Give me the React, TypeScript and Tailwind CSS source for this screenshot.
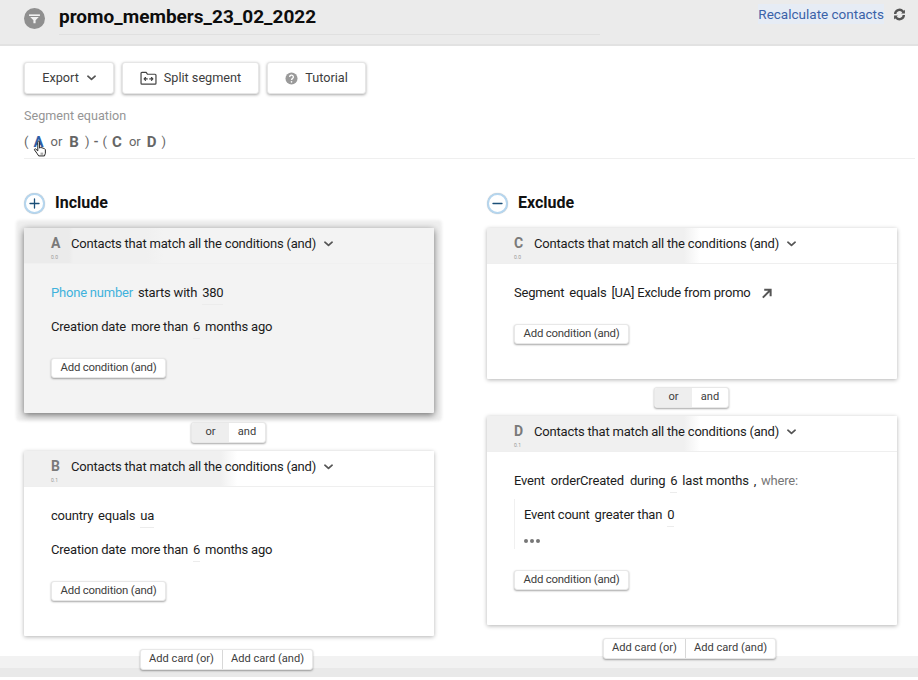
import React from "react";

const Chevron = ({ className = "" }: { className?: string }) => (
  <svg viewBox="0 0 10 6" className={`w-[9px] h-[6px] ${className}`} fill="none" stroke="#555" strokeWidth="1.9" strokeLinecap="round" strokeLinejoin="round">
    <path d="M1 1l4 3.6L9 1" />
  </svg>
);

const Btn = ({ children, className = "" }: { children: React.ReactNode; className?: string }) => (
  <button className={`h-[32px] bg-white rounded-[3px] border border-[#e6e6e6] shadow-[0_1px_3px_rgba(0,0,0,0.35)] text-[12.7px] text-[#3d3d3d] flex items-center justify-center ${className}`}>
    {children}
  </button>
);

const Val = ({ children }: { children: React.ReactNode }) => (
  <span className="relative after:absolute after:left-0 after:right-0 after:top-[19px] after:h-px after:bg-[#ececec]">{children}</span>
);

const AddCondition = () => (
  <button className="w-[115px] h-[20px] bg-white rounded-[3px] border border-[#e8e8e8] shadow-[0_1px_2px_rgba(0,0,0,0.35)] text-[11.4px] text-[#3d3d3d] flex items-center justify-center">
    Add condition (and)
  </button>
);

const Card = ({
  letter, index, active = false, height, children,
}: { letter: string; index: string; active?: boolean; height: string; children: React.ReactNode }) => (
  <div className={`w-[410px] rounded-[1px] flex flex-col ${height} ${active ? "bg-[#f3f3f3] shadow-[0_2px_7px_rgba(0,0,0,0.55),0_0_3px_8px_#efefef]" : "bg-white shadow-[0_1px_4px_rgba(0,0,0,0.3)]"}`}>
    <div className={`h-[36px] shrink-0 flex relative border-b ${active ? "border-[#f0f0f0] bg-[linear-gradient(90deg,#ebebeb_0,#ebebeb_11%,#f0f0f0_12%,#f0f0f0_30%,#f3f3f3_34%)]" : "border-[#efefef] bg-[linear-gradient(90deg,#f0f0f0_0,#f0f0f0_48%,#ffffff_52%)]"}`}>
      <div className="pl-[27px] w-[47px] shrink-0 flex flex-col">
        <span className="text-[14px] leading-[16px] mt-[7px] font-bold text-[#7a7a7a]">{letter}</span>
        <span className="text-[5px] leading-[6px] mt-[3px] text-[#999]">{index}</span>
      </div>
      <div className="flex items-center gap-[8px] h-[32px] text-[13px] tracking-[-0.2px] text-[#1c1c1c]">
        <span>Contacts that match all the conditions (and)</span>
        <Chevron />
      </div>
    </div>
    <div className="pl-[27px] flex flex-col text-[13px] tracking-[-0.2px] text-[#1c1c1c]">{children}</div>
  </div>
);

const OrAnd = () => (
  <div className="flex h-[21px] w-[75px] ml-[167px] rounded-[3px] border border-[#e8e8e8] shadow-[0_1px_2px_rgba(0,0,0,0.35)] text-[11.1px] text-[#3d3d3d] overflow-hidden bg-white">
    <span className="w-[37px] bg-[#eeeeee] flex items-center justify-center">or</span>
    <span className="flex-1 flex items-center justify-center">and</span>
  </div>
);

const AddCards = () => (
  <div className="flex h-[21px] w-[173px] ml-[116px] rounded-[3px] border border-[#e8e8e8] shadow-[0_1px_2px_rgba(0,0,0,0.35)] text-[11.1px] text-[#3d3d3d] bg-white relative">
    <span className="w-[82px] border-r border-[#d8d8d8] flex items-center justify-center">Add card (or)</span>
    <span className="flex-1 flex items-center justify-center">Add card (and)</span>
  </div>
);

const Row = ({ children, className = "" }: { children: React.ReactNode; className?: string }) => (
  <div className={`flex gap-[5px] leading-[16px] ${className}`}>{children}</div>
);

const Heading = ({ sign, title }: { sign: "+" | "-"; title: string }) => (
  <div className="flex items-center gap-[10px] h-[24px]">
    <span className="w-[21px] h-[21px] rounded-full border-2 border-[#b5d6ef] bg-white flex items-center justify-center shadow-[0_0_1px_rgba(0,0,0,0.3)]">
      <svg viewBox="0 0 11 11" className="w-[11px] h-[11px]" stroke="#1b4f78" strokeWidth="1.3" strokeLinecap="round">
        <path d="M1 5.5h9" />
        {sign === "+" && <path d="M5.5 1v9" />}
      </svg>
    </span>
    <span className="text-[16px] font-bold text-[#111]">{title}</span>
  </div>
);

export default function App() {
  return (
    <div className="w-[918px] h-[680px] overflow-hidden relative bg-white font-['Roboto','Liberation_Sans',sans-serif]">
      {/* bottom page band, behind the content */}
      <div className="absolute left-0 right-0 top-[656px] h-[21px] bg-[#f2f2f2] border-b-[9px] border-[#e9e9e9]" />

      <div className="relative">
        <header className="h-[46px] bg-[#ebebeb] border-b-2 border-[#e2e2e2] flex items-start pl-[24px] pr-[12px]">
          <span className="w-[21px] h-[21px] mt-[8px] rounded-full bg-[#8f8f8f] flex items-center justify-center shrink-0">
            <svg viewBox="0 0 12 12" className="w-[13px] h-[13px]" fill="#f2f2f2">
              <path d="M1 2.2h10v1.5H1z" />
              <path d="M2 4.6h8L7 7.6v2.8H5V7.6z" />
            </svg>
          </span>
          <div className="ml-[14px] w-[541px] h-[35px] border-b border-[#e0e0e0] text-[19px] leading-[34px] font-bold text-[#0d0d0d]">
            promo_members_23_02_2022
          </div>
          <div className="ml-auto flex items-center gap-[9px] h-[28px]">
            <span className="text-[13.5px] text-[#3b62a8] bg-[#e6ecf5]">Recalculate contacts</span>
            <svg viewBox="0 0 24 24" className="w-[13px] h-[13px]" fill="none" stroke="#555" strokeWidth="4.5">
              <path d="M4 11a8 8 0 0 1 14-5l2 2" />
              <path d="M20 13a8 8 0 0 1-14 5l-2-2" />
              <path d="M22 3v7h-7zM2 21v-7h7z" fill="#555" stroke="none" />
            </svg>
          </div>
        </header>

        <div className="pl-[24px] pt-[16px]">
          <div className="flex gap-[8px]">
            <Btn className="w-[90px] gap-[8px]">Export <Chevron /></Btn>
            <Btn className="w-[137px] gap-[7px]">
              <svg viewBox="0 0 18 15" className="w-[17px] h-[14px]" fill="none" stroke="#444" strokeWidth="1.3" strokeLinecap="round" strokeLinejoin="round">
                <path d="M1 2.5a1 1 0 0 1 1-1h4.5l1.5 2h8a1 1 0 0 1 1 1v8.5a1 1 0 0 1-1 1H2a1 1 0 0 1-1-1z" />
                <path d="M4.5 8.5h3.2M5.8 7L4.3 8.5 5.8 10M13.5 8.5h-3.2M12.2 7l1.5 1.5L12.2 10" />
              </svg>
              Split segment
            </Btn>
            <Btn className="w-[99px] gap-[7px]">
              <svg viewBox="0 0 14 14" className="w-[13px] h-[13px]">
                <circle cx="7" cy="7" r="6.5" fill="#9a9a9a" />
                <path d="M5 5.4a2 2 0 1 1 3 1.7c-.7.4-1 .8-1 1.5" fill="none" stroke="#fff" strokeWidth="1.4" />
                <circle cx="7" cy="10.6" r=".9" fill="#fff" />
              </svg>
              Tutorial
            </Btn>
          </div>

          <div className="mt-[14px] text-[12.6px] leading-[16px] text-[#959595]">Segment equation</div>
          <div className="mt-[10px] h-[25px] w-[891px] border-b border-[#efefef] flex items-start text-[13px] leading-[16px] text-[#666] relative">
            <span>(</span>
            <span className="ml-[5px] font-bold text-[15px] text-[#2e5fa8]">A</span>
            <span className="ml-[7px]">or</span>
            <span className="ml-[7px] font-bold text-[15px]">B</span>
            <span className="ml-[6px]">)</span>
            <span className="ml-[4px] font-bold">-</span>
            <span className="ml-[4px]">(</span>
            <span className="ml-[5px] font-bold text-[15px]">C</span>
            <span className="ml-[7px]">or</span>
            <span className="ml-[6px] font-bold text-[15px]">D</span>
            <span className="ml-[5px]">)</span>
            {/* hand cursor over the equation */}
            <svg viewBox="0 0 16 20" className="absolute left-[9px] top-[6px] w-[15px] h-[18px]" fill="#fff" stroke="#222" strokeWidth="1.1" strokeLinejoin="round">
              <path d="M5 2.2a1 1 0 0 1 2 0V9l1.2-.6 1.4.2 1.3.5 1.6.6.9 1v4l-1 3H6l-2-3-2.6-3.6c-.5-.9.6-1.8 1.4-1l2.2 2z" />
              <path d="M8 14h3v2.5H8z" fill="#aaa" stroke="none" />
            </svg>
          </div>

          <div className="flex gap-[53px] mt-[32px]">
            <div className="w-[410px] flex flex-col">
              <Heading sign="+" title="Include" />
              <div className="mt-[13px]">
                <Card letter="A" index="0.0" active height="h-[185px]">
                  <Row className="mt-[21px] gap-[4px]">
                    <span className="text-[#3fb2dc]">Phone number</span>
                    <span>starts with</span>
                    <Val>380</Val>
                  </Row>
                  <Row className="mt-[18px]">
                    <span>Creation date</span>
                    <span>more than</span>
                    <Val>6</Val>
                    <span>months ago</span>
                  </Row>
                  <div className="mt-[23px]"><AddCondition /></div>
                </Card>
              </div>
              <div className="mt-[9px]"><OrAnd /></div>
              <div className="mt-[8px]">
                <Card letter="B" index="0.1" height="h-[185px]">
                  <Row className="mt-[21px]">
                    <span>country</span>
                    <span>equals</span>
                    <Val>ua</Val>
                  </Row>
                  <Row className="mt-[18px]">
                    <span>Creation date</span>
                    <span>more than</span>
                    <Val>6</Val>
                    <span>months ago</span>
                  </Row>
                  <div className="mt-[23px]"><AddCondition /></div>
                </Card>
              </div>
              <div className="mt-[13px]"><AddCards /></div>
            </div>

            <div className="w-[410px] flex flex-col">
              <Heading sign="-" title="Exclude" />
              <div className="mt-[13px]">
                <Card letter="C" index="0.0" height="h-[151px]">
                  <Row className="mt-[21px] items-center">
                    <span>Segment</span>
                    <span>equals</span>
                    <span>[UA] Exclude from promo</span>
                    <svg viewBox="0 0 12 12" className="w-[11px] h-[11px] ml-[5px] mt-[1px]" fill="none" stroke="#555" strokeWidth="2.2">
                      <path d="M2 10.5L10 2.5M3.5 2h7v7" />
                    </svg>
                  </Row>
                  <div className="mt-[23px]"><AddCondition /></div>
                </Card>
              </div>
              <div className="mt-[8px]"><OrAnd /></div>
              <div className="mt-[8px]">
                <Card letter="D" index="0.1" height="h-[209px]">
                  <Row className="mt-[21px]">
                    <span>Event</span>
                    <span className="ml-[1px]">orderCreated</span>
                    <span className="ml-[1px]">during</span>
                    <Val>6</Val>
                    <span>last months</span>
                    <span>,</span>
                    <span className="text-[#777]">where:</span>
                  </Row>
                  <div className="mt-[10px] pl-[9px] border-l border-[#f0f0f0] h-[50px]">
                    <Row className="pt-[8px]">
                      <span>Event count</span>
                      <span>greater than</span>
                      <Val>0</Val>
                    </Row>
                    <div className="flex gap-[2px] mt-[16px]">
                      <span className="w-[4px] h-[4px] rounded-full bg-[#777]" />
                      <span className="w-[4px] h-[4px] rounded-full bg-[#777]" />
                      <span className="w-[4px] h-[4px] rounded-full bg-[#777]" />
                    </div>
                  </div>
                  <div className="mt-[21px]"><AddCondition /></div>
                </Card>
              </div>
              <div className="mt-[13px]"><AddCards /></div>
            </div>
          </div>
        </div>
      </div>
    </div>
  );
}
